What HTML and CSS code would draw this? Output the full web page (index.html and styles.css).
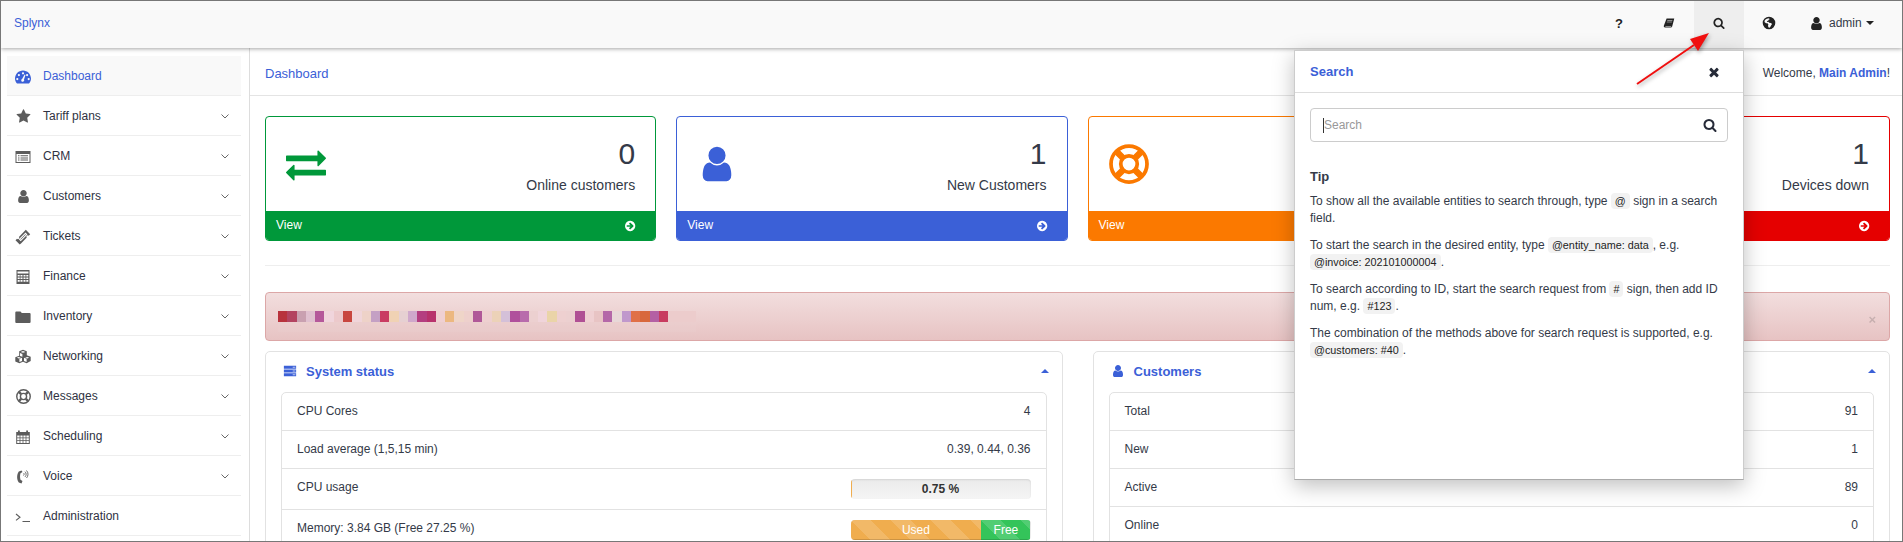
FILE: index.html
```html
<!DOCTYPE html>
<html lang="en">
  <head>
    <meta charset="UTF-8" />
    <meta name="viewport" content="width=device-width, initial-scale=1.0" />
    <title>Splynx</title>
    <link rel="stylesheet" href="styles.css">
  </head>
  <body>
    <svg class="sprite" xmlns="http://www.w3.org/2000/svg">
      <symbol id="i-search" viewBox="0 0 1792 1792"><path d="M1216 832q0-185-131.5-316.5t-316.5-131.5-316.5 131.5-131.5 316.5 131.5 316.5 316.5 131.5 316.5-131.5 131.5-316.5zm512 832q0 52-38 90t-90 38q-54 0-90-38l-343-342q-179 124-399 124-143 0-273.5-55.5t-225-150-150-225-55.5-273.5 55.5-273.5 150-225 225-150 273.5-55.5 273.5 55.5 225 150 150 225 55.5 273.5q0 220-124 399l343 343q37 37 37 90z"/></symbol>
      <symbol id="i-user" viewBox="0 0 1792 1792"><path d="M1536 1399q0 109-62.5 187t-150.5 78h-854q-88 0-150.5-78t-62.5-187q0-85 8.5-160.5t31.5-152 58.5-131 94-89 134.5-34.5q131 128 313 128t313-128q76 0 134.5 34.5t94 89 58.5 131 31.5 152 8.5 160.5zm-256-887q0 159-112.5 271.5t-271.5 112.5-271.5-112.5-112.5-271.5 112.5-271.5 271.5-112.5 271.5 112.5 112.5 271.5z"/></symbol>
      <symbol id="i-star" viewBox="0 0 1792 1792"><path d="M1728 647q0 22-26 48l-363 354 86 500q1 7 1 20 0 21-10.5 35.5t-30.5 14.5q-19 0-40-12l-449-236-449 236q-22 12-40 12-21 0-31.5-14.5t-10.5-35.5q0-6 2-20l86-500-364-354q-25-27-25-48 0-37 56-46l502-73 225-455q19-41 49-41t49 41l225 455 502 73q56 9 56 46z"/></symbol>
      <symbol id="i-times" viewBox="0 0 1792 1792"><path d="M1490 1322q0 40-28 68l-136 136q-28 28-68 28t-68-28l-294-294-294 294q-28 28-68 28t-68-28l-136-136q-28-28-28-68t28-68l294-294-294-294q-28-28-28-68t28-68l136-136q28-28 68-28t68 28l294 294 294-294q28-28 68-28t68 28l136 136q28 28 28 68t-28 68l-294 294 294 294q28 28 28 68z"/></symbol>
      <symbol id="i-exchange" viewBox="0 0 1792 1792"><path d="M1792 1184v192q0 13-9.5 22.5t-22.5 9.5h-1376v192q0 13-9.5 22.5t-22.5 9.5q-12 0-24-10l-319-320q-9-9-9-22 0-14 9-23l320-320q9-9 23-9 13 0 22.5 9.5t9.5 22.5v192h1376q13 0 22.5 9.5t9.5 22.5zm0-544q0 14-9 23l-320 320q-9 9-23 9-13 0-22.5-9.5t-9.5-22.5v-192h-1376q-13 0-22.5-9.5t-9.5-22.5v-192q0-13 9.5-22.5t22.5-9.5h1376v-192q0-14 9-23t23-9q12 0 24 10l319 319q9 9 9 23z"/></symbol>
      <symbol id="i-arrow-circle" viewBox="0 0 1792 1792"><path d="M1285 896q0-27-18-45l-91-91-362-362q-18-18-45-18t-45 18l-91 91q-18 18-18 45t18 45l189 189h-502q-26 0-45 19t-19 45v128q0 26 19 45t45 19h502l-189 189q-19 19-19 45t19 45l91 91q18 18 45 18t45-18l362-362 91-91q18-18 18-45zm251 0q0 209-103 385.5t-279.5 279.5-385.5 103-385.5-103-279.5-279.5-103-385.5 103-385.5 279.5-279.5 385.5-103 385.5 103 279.5 279.5 103 385.5z"/></symbol>
      <symbol id="i-dashboard" viewBox="0 0 16 16"><path fill-rule="evenodd" d="M2 14.5C.8 13.2 0 11.4 0 9.5 0 5.1 3.6 1.5 8 1.5s8 3.6 8 8c0 1.9-.8 3.7-2 5zM8 3.2a1.1 1.1 0 1 0 0 2.2 1.1 1.1 0 0 0 0-2.2zM3.9 5a1.1 1.1 0 1 0 0 2.2 1.1 1.1 0 0 0 0-2.2zM12.1 5a1.1 1.1 0 1 0 0 2.2 1.1 1.1 0 0 0 0-2.2zM2.3 9a1.1 1.1 0 1 0 0 2.2 1.1 1.1 0 0 0 0-2.2zM13.7 9a1.1 1.1 0 1 0 0 2.2 1.1 1.1 0 0 0 0-2.2zM9.6 5.6 7.1 9.9a1.5 1.5 0 1 0 1.9.6l1.5-4.6z"/></symbol>
      <symbol id="i-list" viewBox="0 0 16 16"><path fill-rule="evenodd" d="M.5 2h15v12H.5zM1.5 5v8h13V5zM3 6.2h1.5v1H3zM5.5 6.2H13v1H5.5zM3 8.4h1.5v1H3zM5.5 8.4H13v1H5.5zM3 10.6h1.5v1H3zM5.5 10.6H13v1H5.5z"/></symbol>
      <symbol id="i-ticket" viewBox="0 0 16 16"><path fill-rule="evenodd" d="M10.8.8 15.200 5.200l-1.500 1.500a1.300 1.300 0 0 0-1.900 1.900L6 14.500 4.700 15.500.5 11.300l1.500-1.500a1.300 1.300 0 0 0 1.900-1.900zM10.500 3.600 3.800 10.300l1.900 1.900 6.700-6.700zM10.500 5.100l.4.4-5.200 5.200-.4-.4z"/></symbol>
      <symbol id="i-grid" viewBox="0 0 16 16"><path fill-rule="evenodd" d="M1.500 1h13v14h-13zM2.500 2.500v2h11v-2zM2.700 6v1.600h2V6zM5.500 6v1.600h2V6zM8.500 6v1.600h2V6zM11.300 6v1.600h2V6zM2.700 8.500v1.600h2V8.500zM5.500 8.500v1.600h2V8.500zM8.500 8.500v1.600h2V8.500zM11.300 8.500v1.600h2V8.500zM2.700 11v1.800h2V11zM5.500 11v1.800h2V11zM8.500 11v1.800h2V11zM11.300 11v1.800h2V11z"/></symbol>
      <symbol id="i-folder" viewBox="0 0 16 16"><path d="M1.200 2.500h4.300l1.300 1.600h7.900c.5 0 .9.400.9.900v8c0 .5-.4.900-.9.900H1.200c-.5 0-.9-.4-.9-.9V3.400c0-.5.400-.9.900-.9z"/></symbol>
      <symbol id="i-cubes" viewBox="0 0 18 16"><path fill-rule="evenodd" d="M9 .8l3.800 1.500v3.900l3.900 1.500v4.300L12.600 14.300 9 12.800 5.400 14.300 1.300 12.500V8.200l3.900-1.500V2.300zM9 2 6.600 2.900 9 3.800l2.400-.9zM4.800 8 2.800 8.800l2.100.8 2-.8zM13.200 8l-2 .8 2.100.8 2-.8zM6 4v2.900l2.400.9V4.900zM10 8.800V12l2.600 1.100V9.800zM5.400 9.800V13l2.600-1V8.800z"/></symbol>
      <symbol id="i-lifering" viewBox="0 0 16 16"><g fill="none" stroke="currentColor"><circle cx="8" cy="8" r="7.200" stroke-width="1.500"/><circle cx="8" cy="8" r="3.300" stroke-width="1.500"/><path stroke-width="2.600" d="M3 3l2.500 2.500M13 3l-2.500 2.500M3 13l2.500-2.500M13 13l-2.500-2.500"/></g></symbol>
      <symbol id="i-calendar" viewBox="0 0 16 16"><path fill-rule="evenodd" d="M3 1.500h1.800V3h6.400V1.500H13V3h1.800v12H1.200V3H3zM2.200 6.500v2h2.400v-2zM5.400 6.500v2h2.200v-2zM8.400 6.500v2h2.200v-2zM11.400 6.500v2h2.400v-2zM2.200 9.300v2h2.400v-2zM5.400 9.300v2h2.200v-2zM8.400 9.300v2h2.200v-2zM11.400 9.300v2h2.400v-2zM2.200 12.100V14h2.400v-1.900zM5.400 12.100V14h2.200v-1.900zM8.400 12.100V14h2.200v-1.900zM11.400 12.100V14h2.400v-1.900z"/></symbol>
      <symbol id="i-phone" viewBox="0 0 16 16"><path d="M6.500 1.500 3.800 2.500C1.600 5.500 1.600 10.500 3.800 13.500l2.700 1 1-2.500-2-1.300c-.6-1.900-.6-4.500 0-6.400l2-1.300z"/><path fill="none" stroke="currentColor" stroke-width=".9" d="M8.500 4c.8.6.8 1.800 0 2.500M10 2.700c1.500 1.300 1.500 3.800 0 5.200M11.500 1.500c2 2 2 5.500 0 7.500"/></symbol>
      <symbol id="i-terminal" viewBox="0 0 16 16"><path fill="none" stroke="currentColor" stroke-width="1.100" d="M1 5l4 3.200-4 3.200M7.500 12.500H15"/></symbol>
      <symbol id="i-book" viewBox="0 0 16 16"><path fill-rule="evenodd" d="M4.800 2h10.200l-.3 1.200-2.500 9.600c-.2.800-.9 1.200-1.700 1.200H2.800C1.500 14 .8 13 1.100 11.800zM5.800 4.200l-.2.800h6.800l.2-.8zM5.200 6.200l-.2.800h6.800l.2-.8zM3 12.300c.3.300.8.400 1.200.4h6.600l.2-.8H3.500c-.2 0-.4.200-.5.400z"/></symbol>
      <symbol id="i-globe" viewBox="0 0 16 16"><path fill-rule="evenodd" d="M8 .8a7.200 7.200 0 1 1 0 14.400A7.200 7.200 0 0 1 8 .8zM5.500 3 3.300 4.500l-.5 2.400 1.800 1.300 1.700.2 1 1.400-.5 1.500 1 2 1.300-.2 1.400-2.400 1-1.500-1.300-1.200-2-.2-.9-1.200-1.300.2-.4-1 1.500-.3.5-1.200 1-.4-.5-1.200z"/></symbol>
      <symbol id="i-server" viewBox="0 0 16 16"><path fill-rule="evenodd" d="M1 2h14v3.400H1zM1 6.300h14v3.400H1zM1 10.600h14V14H1zM11.200 3.200v1h1v-1zM13 3.200v1h1v-1zM11.200 7.500v1h1v-1zM13 7.500v1h1v-1zM11.200 11.800v1h1v-1zM13 11.800v1h1v-1z"/></symbol>
    </svg>

    <div class="app">
      <header class="topbar">
        <a class="brand">Splynx</a>
        <nav class="topnav">
          <span class="topcell help">?</span>
          <span class="topcell"><svg class="ico-12"><use href="#i-book"/></svg></span>
          <span class="topcell active"><svg class="ico-12"><use href="#i-search"/></svg></span>
          <span class="topcell"><svg class="ico-14"><use href="#i-globe"/></svg></span>
          <span class="topcell usercell">
            <svg class="ico-15"><use href="#i-user"/></svg>
            <span>admin</span>
            <i class="caret-down"></i>
          </span>
        </nav>
      </header>

      <div class="layout">
        <aside class="sidebar">
          <a class="nav-item current"><span class="nav-ico"><svg class="ico-16"><use href="#i-dashboard"/></svg></span>Dashboard</a>
          <a class="nav-item"><span class="nav-ico"><svg class="ico-15"><use href="#i-star"/></svg></span>Tariff plans<svg class="chev" viewBox="0 0 8 5"><path d="M.5.5 4 4 7.500.5"/></svg></a>
          <a class="nav-item"><span class="nav-ico"><svg class="ico-16"><use href="#i-list"/></svg></span>CRM<svg class="chev" viewBox="0 0 8 5"><path d="M.5.5 4 4 7.500.5"/></svg></a>
          <a class="nav-item"><span class="nav-ico"><svg class="ico-15"><use href="#i-user"/></svg></span>Customers<svg class="chev" viewBox="0 0 8 5"><path d="M.5.5 4 4 7.500.5"/></svg></a>
          <a class="nav-item"><span class="nav-ico"><svg class="ico-16"><use href="#i-ticket"/></svg></span>Tickets<svg class="chev" viewBox="0 0 8 5"><path d="M.5.5 4 4 7.500.5"/></svg></a>
          <a class="nav-item"><span class="nav-ico"><svg class="ico-16"><use href="#i-grid"/></svg></span>Finance<svg class="chev" viewBox="0 0 8 5"><path d="M.5.5 4 4 7.500.5"/></svg></a>
          <a class="nav-item"><span class="nav-ico"><svg class="ico-16"><use href="#i-folder"/></svg></span>Inventory<svg class="chev" viewBox="0 0 8 5"><path d="M.5.5 4 4 7.500.5"/></svg></a>
          <a class="nav-item"><span class="nav-ico"><svg class="ico-18"><use href="#i-cubes"/></svg></span>Networking<svg class="chev" viewBox="0 0 8 5"><path d="M.5.5 4 4 7.500.5"/></svg></a>
          <a class="nav-item"><span class="nav-ico"><svg class="ico-15"><use href="#i-lifering"/></svg></span>Messages<svg class="chev" viewBox="0 0 8 5"><path d="M.5.5 4 4 7.500.5"/></svg></a>
          <a class="nav-item"><span class="nav-ico"><svg class="ico-16"><use href="#i-calendar"/></svg></span>Scheduling<svg class="chev" viewBox="0 0 8 5"><path d="M.5.5 4 4 7.500.5"/></svg></a>
          <a class="nav-item"><span class="nav-ico"><svg class="ico-16"><use href="#i-phone"/></svg></span>Voice<svg class="chev" viewBox="0 0 8 5"><path d="M.5.5 4 4 7.500.5"/></svg></a>
          <a class="nav-item"><span class="nav-ico"><svg class="ico-16"><use href="#i-terminal"/></svg></span>Administration</a>
        </aside>

        <main class="main">
          <div class="main-head">
            <a class="crumb">Dashboard</a>
            <span>Welcome, <b class="link">Main Admin</b>!</span>
          </div>

          <div class="content">
            <section class="cards">
              <div class="card green">
                <div class="card-body">
                  <svg class="ico-40"><use href="#i-exchange"/></svg>
                  <div class="card-text"><div class="card-value">0</div><div class="card-label">Online customers</div></div>
                </div>
                <a class="card-foot">View<svg class="ico-12"><use href="#i-arrow-circle"/></svg></a>
              </div>
              <div class="card blue">
                <div class="card-body">
                  <svg class="ico-40"><use href="#i-user"/></svg>
                  <div class="card-text"><div class="card-value">1</div><div class="card-label">New Customers</div></div>
                </div>
                <a class="card-foot">View<svg class="ico-12"><use href="#i-arrow-circle"/></svg></a>
              </div>
              <div class="card orange">
                <div class="card-body">
                  <svg class="ico-40"><use href="#i-lifering"/></svg>
                  <div class="card-text"><div class="card-value">0</div><div class="card-label">New Tickets</div></div>
                </div>
                <a class="card-foot">View<svg class="ico-12"><use href="#i-arrow-circle"/></svg></a>
              </div>
              <div class="card red">
                <div class="card-body">
                  <svg class="ico-40"><use href="#i-server"/></svg>
                  <div class="card-text"><div class="card-value">1</div><div class="card-label">Devices down</div></div>
                </div>
                <a class="card-foot">View<svg class="ico-12"><use href="#i-arrow-circle"/></svg></a>
              </div>
            </section>

            <hr class="divider" />

            <div class="alert">
              <div class="alert-band"><div class="alert-pixels"></div></div>
              <span class="alert-close">&times;</span>
            </div>

            <section class="panels">
              <div class="panel">
                <div class="panel-head">
                  <svg class="ico-14"><use href="#i-server"/></svg>
                  <h3>System status</h3>
                  <i class="caret-up"></i>
                </div>
                <div class="rows">
                  <div class="row"><span>CPU Cores</span><span>4</span></div>
                  <div class="row"><span>Load average (1,5,15 min)</span><span>0.39, 0.44, 0.36</span></div>
                  <div class="row">
                    <span>CPU usage</span>
                    <div class="progress"><div class="progress-used cpu-fill" style="width: 0.75%"></div><b class="progress-label">0.75 %</b></div>
                  </div>
                  <div class="row">
                    <span>Memory: 3.84 GB (Free 27.25 %)</span>
                    <div class="progress">
                      <div class="progress-used striped" style="width: 72.75%">Used</div>
                      <div class="progress-free striped" style="width: 27.25%">Free</div>
                    </div>
                  </div>
                </div>
              </div>

              <div class="panel">
                <div class="panel-head">
                  <svg class="ico-14"><use href="#i-user"/></svg>
                  <h3>Customers</h3>
                  <i class="caret-up"></i>
                </div>
                <div class="rows">
                  <div class="row"><span>Total</span><span>91</span></div>
                  <div class="row"><span>New</span><span>1</span></div>
                  <div class="row"><span>Active</span><span>89</span></div>
                  <div class="row"><span>Online</span><span>0</span></div>
                </div>
              </div>
            </section>
          </div>
        </main>
      </div>

      <!-- search popup + annotation arrow sit over the page -->
      <div class="search-pop">
        <div class="pop-head">
          <b class="link pop-title">Search</b>
          <svg class="ico-14"><use href="#i-times"/></svg>
        </div>
        <div class="pop-body">
          <div class="search-box">
            <i class="text-caret"></i>
            <input type="text" placeholder="Search" />
            <svg class="ico-14"><use href="#i-search"/></svg>
          </div>
          <h4>Tip</h4>
          <p>To show all the available entities to search through, type <code>@</code> sign in a search field.</p>
          <p>To start the search in the desired entity, type <code>@entity_name: data</code>, e.g. <code>@invoice: 202101000004</code>.</p>
          <p>To search according to ID, start the search request from <code>#</code> sign, then add ID num, e.g. <code>#123</code>.</p>
          <p>The combination of the methods above for search request is supported, e.g. <code>@customers: #40</code>.</p>
        </div>
      </div>

      <svg class="red-arrow" viewBox="0 0 90 70">
        <path d="M1 54 58 15" stroke="#f00f0f" stroke-width="2" fill="none"/>
        <path d="M73 3 54 9 62 21z" fill="#f00f0f"/>
      </svg>
    </div>
  </body>
</html>
```

FILE: styles.css
```css
* {
  box-sizing: border-box;
}
html,
body {
  margin: 0;
  height: 100%;
  overflow: hidden;
}
body {
  font-family: "Liberation Sans", Arial, sans-serif;
  font-size: 12px;
  line-height: 17px;
  color: #343a48;
  background: #fff;
}
.sprite {
  display: none;
}
svg {
  fill: currentColor;
  flex: none;
}
.ico-12 { width: 12px; height: 12px; }
.ico-14 { width: 14px; height: 14px; }
.ico-15 { width: 15px; height: 15px; }
.ico-16 { width: 16px; height: 16px; }
.ico-18 { width: 18px; height: 16px; }
.ico-40 { width: 40px; height: 40px; }
.link,
.brand,
.crumb {
  color: #3b60d7;
}

.app {
  position: relative;
  height: 542px;
  border: 1px solid #777;
  overflow: hidden;
}

/* top bar */
.topbar {
  position: relative;
  z-index: 2;
  height: 47px;
  display: flex;
  align-items: center;
  justify-content: space-between;
  padding-left: 13px;
  background: #f9f9f9;
  box-shadow: 0 1px 4px rgba(0, 0, 0, 0.35);
}
.brand {
  padding-bottom: 3px;
}
.topnav {
  display: flex;
  height: 100%;
  padding-right: 13px;
}
.topcell {
  width: 50px;
  display: flex;
  align-items: center;
  justify-content: center;
  padding-bottom: 3px;
  color: #222;
}
.topcell.active {
  background: #eee;
}
.help {
  font-weight: bold;
  font-size: 13px;
}
.usercell {
  width: 95px;
  gap: 5px;
  justify-content: flex-start;
  padding-left: 15px;
  color: #343a48;
}
.usercell svg {
  color: #222;
}
.caret-down {
  width: 0;
  height: 0;
  margin-left: -1px;
  border-left: 4px solid transparent;
  border-right: 4px solid transparent;
  border-top: 4px solid #222;
}

.layout {
  display: flex;
  height: 494px;
}

/* sidebar */
.sidebar {
  width: 249px;
  flex: none;
  padding: 8px 8px 0 6px;
  border-right: 1px solid #ddd;
}
.nav-item {
  height: 40px;
  display: flex;
  align-items: center;
  padding: 2px 12px 0 8px;
  border-bottom: 1px solid #eee;
  color: #2f3242;
}
.nav-item.current {
  background: #f9f9f9;
  color: #3b60d7;
}
.nav-ico {
  width: 16px;
  margin-right: 12px;
  display: flex;
  justify-content: center;
  color: #5c5c5c;
}
.current .nav-ico {
  color: #3b60d7;
}
.chev {
  width: 8px;
  height: 5px;
  margin-left: auto;
  fill: none;
  stroke: #666;
  stroke-width: 1;
}

/* main */
.main {
  flex: 1;
  min-width: 0;
}
.main-head {
  height: 48px;
  display: flex;
  align-items: center;
  justify-content: space-between;
  padding: 4px 12px 0 15px;
  border-bottom: 1px solid #e4e4e4;
}
.crumb {
  font-size: 13px;
}
.content {
  padding: 20px 12px 0 15px;
}

.cards {
  display: grid;
  grid-template-columns: repeat(4, 1fr);
  gap: 20px;
}
.card {
  height: 125px;
  border: 1px solid;
  border-radius: 4px;
  overflow: hidden;
  display: flex;
  flex-direction: column;
}
.card.green { color: #00983a; }
.card.blue { color: #3b60d7; }
.card.orange { color: #fb7900; }
.card.red { color: #e50000; }
.card-body {
  flex: 1;
  display: flex;
  align-items: center;
  justify-content: space-between;
  padding: 0 20px;
}
.card-text {
  margin-top: 4px;
  text-align: right;
  color: #343a48;
}
.card-value {
  font-size: 30px;
  line-height: 33px;
}
.card-label {
  margin-top: 5px;
  font-size: 14px;
  line-height: 20px;
}
.card-foot {
  height: 29px;
  display: flex;
  flex: none;
  align-items: center;
  justify-content: space-between;
  padding: 0 18px 0 10px;
  background: currentColor;
}
.card-foot,
.card-foot svg {
  -webkit-text-fill-color: #fff;
}
.card-foot svg {
  fill: #fff;
}

.divider {
  height: 1px;
  margin: 24px 0 26px;
  border: 0;
  background: #eee;
}

.alert {
  position: relative;
  height: 49px;
  padding: 18px 12px 0;
  border: 1px solid #dca7a7;
  border-radius: 4px;
  background: linear-gradient(#f2dede, #e7c3c3);
}
.alert-band {
  width: 418px;
  height: 21px;
  background: rgba(235, 205, 205, 0.35);
}
.alert-pixels {
  height: 11px;
  background: linear-gradient(90deg,
    #b8323c 0 9px, #b34360 9px 19px, #c9a0b0 19px 28px, #e0c0cf 28px 37px,
    #b5589a 37px 46px, #f0d5dc 46px 56px, #ecc9cb 56px 65px, #c8463f 65px 74px,
    #f0d5da 74px 84px, #eed2c8 84px 93px, #c4a0c4 93px 102px, #c93c62 102px 111px,
    #f0d2b4 111px 121px, #e6d0d2 121px 130px, #cfa8cb 130px 139px, #b43e80 139px 149px,
    #b8326c 149px 158px, #efd0d2 158px 167px, #ecb880 167px 176px, #efd5c8 176px 186px,
    #eed0cc 186px 195px, #b05898 195px 204px, #eed0d0 204px 214px, #ecd2b8 214px 223px,
    #d4c0d8 223px 232px, #b0509c 232px 242px, #b86cac 242px 251px, #ecd0d0 251px 260px,
    #f0d4da 260px 269px, #ead4a8 269px 279px, #eed0d0 279px 288px, #ecd0d0 288px 297px,
    #b05094 297px 307px, #efd0d2 307px 316px, #e8c4c4 316px 325px, #b468a8 325px 334px,
    #e8d8d8 334px 344px, #c098cc 344px 353px, #e07048 353px 362px, #d8683c 362px 372px,
    #b460a4 372px 381px, #c83c60 381px 390px, #eccccc 390px 418px);
}
.alert-close {
  position: absolute;
  right: 13px;
  top: 18px;
  font-size: 13px;
  font-weight: bold;
  color: #333;
  opacity: 0.2;
}

.panels {
  display: grid;
  grid-template-columns: 1fr 1fr;
  gap: 30px;
  margin-top: 10px;
}
.panel {
  height: 300px;
  padding: 0 15px;
  border: 1px solid #e2e2e2;
  border-radius: 5px;
}
.panel-head {
  height: 40px;
  display: flex;
  align-items: center;
  gap: 9px;
  padding: 0 0 2px 2px;
  color: #3b60d7;
}
.panel-head h3 {
  margin: 0;
  font-size: 13px;
}
.caret-up {
  width: 0;
  height: 0;
  margin: 0 -2px 0 auto;
  border-left: 4px solid transparent;
  border-right: 4px solid transparent;
  border-bottom: 4px solid #3b60d7;
}
.rows {
  border: 1px solid #e2e2e2;
  border-radius: 5px;
}
.row {
  display: flex;
  justify-content: space-between;
  padding: 10px 15px;
  border-bottom: 1px solid #e2e2e2;
}
.progress {
  position: relative;
  width: 180px;
  height: 20px;
  display: flex;
  overflow: hidden;
  border-radius: 4px;
  background: linear-gradient(#ebebeb, #f5f5f5);
  box-shadow: inset 0 1px 2px rgba(0, 0, 0, 0.1);
  color: #fff;
  text-align: center;
  line-height: 20px;
}
.progress-used {
  background-color: #f0ad4e;
  box-shadow: inset 0 -1px 0 rgba(0, 0, 0, 0.15);
}
.progress-free {
  background-color: #34c45a;
  box-shadow: inset 0 -1px 0 rgba(0, 0, 0, 0.15);
}
.striped {
  background-image: linear-gradient(45deg,
    rgba(255, 255, 255, 0.15) 25%, transparent 25%,
    transparent 50%, rgba(255, 255, 255, 0.15) 50%,
    rgba(255, 255, 255, 0.15) 75%, transparent 75%, transparent);
  background-size: 40px 40px;
}
.progress-label {
  position: absolute;
  left: 0;
  right: 0;
  color: #333;
}

/* search popup */
.search-pop {
  position: absolute;
  z-index: 3;
  left: 1293px;
  top: 49px;
  width: 450px;
  height: 430px;
  background: #fff;
  border: 1px solid #ccc;
  border-bottom-color: #aaa;
  box-shadow: 0 6px 20px rgba(0, 0, 0, 0.25);
}
.pop-head {
  height: 42px;
  display: flex;
  align-items: center;
  justify-content: space-between;
  padding: 0 22px 0 15px;
  border-bottom: 1px solid #ddd;
  color: #262b38;
}
.pop-title {
  font-size: 13px;
}
.pop-body {
  padding: 15px 15px 0;
}
.search-box {
  position: relative;
  height: 34px;
  display: flex;
  align-items: center;
  padding: 0 10px 0 13px;
  border: 1px solid #ccc;
  border-radius: 4px;
  color: #262b38;
}
.search-box input {
  flex: 1;
  min-width: 0;
  border: 0;
  padding: 0;
  outline: 0;
  background: none;
  font: inherit;
}
.search-box input::placeholder {
  color: #999;
}
.text-caret {
  position: absolute;
  left: 12px;
  top: 9px;
  width: 1px;
  height: 15px;
  background: #333;
}
.pop-body h4 {
  margin: 26px 0 8px;
  font-size: 13px;
  line-height: 17px;
}
.pop-body p {
  margin: 0 0 10px;
}
code {
  padding: 2px 4px;
  border-radius: 4px;
  background: #f2f2f2;
  color: #222;
  font-family: inherit;
  font-size: 90%;
}

.red-arrow {
  position: absolute;
  z-index: 4;
  left: 1635px;
  top: 29px;
  width: 90px;
  height: 70px;
  filter: drop-shadow(1px 2px 2px rgba(0, 0, 0, 0.35));
}
```
